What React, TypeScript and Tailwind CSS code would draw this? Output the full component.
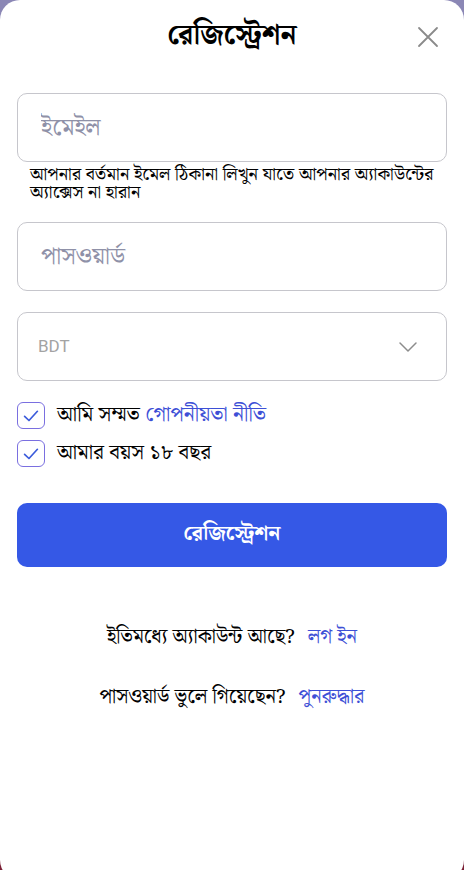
import { useState } from 'react';

const bn = { fontFamily: '"Noto Serif Bengali", "Noto Sans Bengali", "Noto Sans", serif' };

function Check({ checked, onClick }: { checked: boolean; onClick: () => void }) {
    return (
        <button
            onClick={onClick}
            className="flex h-[27px] w-[28px] shrink-0 items-center justify-center rounded-[6px] border border-[#7a6fe0] bg-white"
        >
            {checked && (
                <svg width="18" height="18" viewBox="0 0 16 16" fill="none">
                    <path d="M2.3 8.3 L6.2 12 L13.7 3.8" stroke="#3b5bdb" strokeWidth="1.5" strokeLinecap="round" strokeLinejoin="round" />
                </svg>
            )}
        </button>
    );
}

export default function App() {
    const [agree, setAgree] = useState(true);
    const [adult, setAdult] = useState(true);

    return (
        <div className="h-[870px] w-[464px] overflow-hidden bg-gradient-to-b from-[#8b87b5] via-[#8b87b5] to-[#7a1f35]">
            <div className="flex h-[880px] flex-col rounded-[20px] bg-white px-[17px]" style={bn}>
                <div className="relative flex h-[72px] items-center justify-center">
                    <h1 className="text-[28px] font-bold leading-[36px] text-black">রেজিস্ট্রেশন</h1>
                    <button className="absolute right-[7px] top-[25px]">
                        <svg width="24" height="24" viewBox="0 0 24 24" fill="none">
                            <path d="M3 3 L21 21 M21 3 L3 21" stroke="#8a8a8a" strokeWidth="1.8" strokeLinecap="round" />
                        </svg>
                    </button>
                </div>

                <div className="mt-[21px] flex h-[69px] items-center rounded-[10px] border border-[#c6c6cc] px-[23px]">
                    <input
                        placeholder="ইমেইল"
                        className="w-full bg-transparent text-[24px] outline-none placeholder:text-[#8f91a8]"
                        style={bn}
                    />
                </div>
                <p className="mt-[4px] pl-[13px] text-[18px] leading-[18px] text-black">
                    আপনার বর্তমান ইমেল ঠিকানা লিখুন যাতে আপনার অ্যাকাউন্টের অ্যাক্সেস না হারান
                </p>

                <div className="mt-[20px] flex h-[69px] items-center rounded-[10px] border border-[#c6c6cc] px-[23px]">
                    <input
                        type="text"
                        placeholder="পাসওয়ার্ড"
                        className="w-full bg-transparent text-[24px] outline-none placeholder:text-[#8f91a8]"
                        style={bn}
                    />
                </div>

                <div className="mt-[21px] flex h-[69px] items-center justify-between rounded-[10px] border border-[#c6c6cc] pl-[20px] pr-[28px]">
                    <span className="text-[17px] text-[#a3a3a3]" style={{ fontFamily: 'Roboto, sans-serif' }}>
                        BDT
                    </span>
                    <svg width="20" height="12" viewBox="0 0 20 12" fill="none">
                        <path d="M2 2 L10 10 L18 2" stroke="#8c8c8c" strokeWidth="1.5" strokeLinecap="round" strokeLinejoin="round" />
                    </svg>
                </div>

                <div className="mt-[21px] flex flex-col gap-[11px]">
                    <div className="flex items-center gap-[12px]">
                        <Check checked={agree} onClick={() => setAgree(!agree)} />
                        <span className="text-[21px] leading-[27px] text-black">
                            আমি সম্মত <span className="text-[#3d4fd6]">গোপনীয়তা নীতি</span>
                        </span>
                    </div>
                    <div className="flex items-center gap-[12px]">
                        <Check checked={adult} onClick={() => setAdult(!adult)} />
                        <span className="text-[21px] leading-[27px] text-black">আমার বয়স ১৮ বছর</span>
                    </div>
                </div>

                <button className="mt-[36px] flex h-[64px] items-center justify-center rounded-[10px] bg-[#3558e6] text-[21px] font-bold text-white">
                    রেজিস্ট্রেশন
                </button>

                <div className="mt-[58px] flex flex-col items-center gap-[36px] text-[20px] leading-[24px] text-black">
                    <div>
                        ইতিমধ্যে অ্যাকাউন্ট আছে?<span className="ml-[13px] text-[#3d4fd6]">লগ ইন</span>
                    </div>
                    <div>
                        পাসওয়ার্ড ভুলে গিয়েছেন?<span className="ml-[13px] text-[#3d4fd6]">পুনরুদ্ধার</span>
                    </div>
                </div>
            </div>
        </div>
    );
}
